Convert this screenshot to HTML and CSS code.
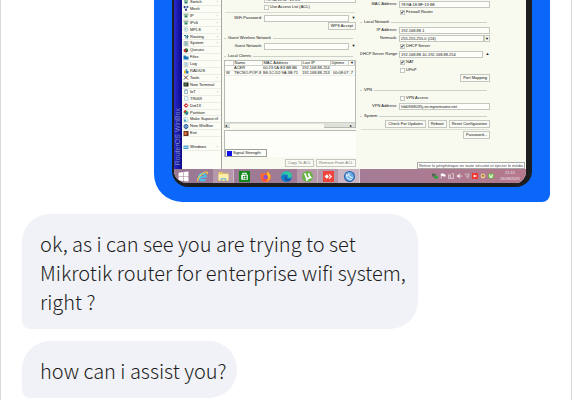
FILE: index.html
```html
<!DOCTYPE html>
<html lang="en">
<head>
<meta charset="utf-8">
<title>Conversation</title>
<link rel="stylesheet" href="styles.css">
</head>
<body>
<main class="chat">
  <article class="shared">
    <div class="screen">
      <div class="desktop">
        <div class="brand"><span>RouterOS WinBox</span></div>
        <nav class="menu">
          <button class="item more"><svg viewBox="0 0 10 10"><path fill="#8ba" d="M1 1h8v4H1z"/><path fill="#376" d="M2 5h6v4H2z"/></svg>Switch</button>
          <button class="item"><svg viewBox="0 0 10 10"><path stroke="#447" d="M2 2h6L4 8z" fill="none"/><circle cx="2" cy="2" r="2" fill="#239"/><circle cx="8" cy="2" r="2" fill="#36a"/><circle cx="5" cy="8" r="2" fill="#239"/></svg>Mesh</button>
          <button class="item more"><svg viewBox="0 0 10 10"><path fill="#9ba" d="M0 1h10v4H0z"/><path fill="#386" d="M2 5h6v4H2z"/></svg>IP</button>
          <button class="item more"><svg viewBox="0 0 10 10"><path fill="#9ba" d="M0 1h10v4H0z"/><path fill="#386" d="M2 5h6v4H2z"/></svg>IPv6</button>
          <button class="item more"><svg viewBox="0 0 10 10"><circle cx="5" cy="5" r="4" fill="#eff" stroke="#7aa"/><path d="M5 2v3H3" fill="none" stroke="#688"/></svg>MPLS</button>
          <button class="item more"><svg viewBox="0 0 10 10"><path d="M1 3h4v6M8 9V3L6 5M8 3l2 2" fill="none" stroke="#278" stroke-width="2"/></svg>Routing</button>
          <button class="item more"><svg viewBox="0 0 10 10"><path fill="#cdd" stroke="#799" d="M1 1h8v8H1z"/><path fill="#7aa" d="M3 3h4v4H3z"/></svg>System</button>
          <button class="item"><svg viewBox="0 0 10 10"><circle cx="5" cy="5" r="4" fill="#232"/><path fill="#c33" d="M0 3h5v5H1z"/><path fill="#384" d="M5 1h3v4H5z"/></svg>Queues</button>
          <button class="item"><svg viewBox="0 0 10 10"><path fill="#17b" d="M0 1h4l1 2h5v6H0z"/></svg>Files</button>
          <button class="item"><svg viewBox="0 0 10 10"><path fill="#dee" stroke="#abb" d="M1 1h8v8H1z"/><path stroke="#8ab" d="M3 3h4M3 5h4M3 7h4"/></svg>Log</button>
          <button class="item"><svg viewBox="0 0 10 10"><path fill="#e7b52b" d="M1 3h4v6H1z"/><path fill="#27b" d="M5 4h5v5H5z"/><circle cx="6" cy="2" r="2" fill="#49c"/></svg>RADIUS</button>
          <button class="item more"><svg viewBox="0 0 10 10"><path stroke="#b33" stroke-width="2" d="M1 1l8 8"/><path stroke="#355" stroke-width="2" d="M9 1L1 9"/></svg>Tools</button>
          <button class="item"><svg viewBox="0 0 10 10"><path fill="#232" d="M0 1h10v8H0z"/><path stroke="#cdc" d="M2 4h5M2 6h3"/></svg>New Terminal</button>
          <button class="item more"><svg viewBox="0 0 10 10"><path fill="#eff" stroke="#478" d="M2 3h6v6H2z"/><path d="M2 2q3-3 6 0" fill="none" stroke="#47b"/></svg>IoT</button>
          <button class="item"><svg viewBox="0 0 10 10"><path fill="#eff" stroke="#8ab" d="M2 1h7v8H2z"/></svg>TR069</button>
          <button class="item"><svg viewBox="0 0 10 10"><path fill="#c33" d="M5 0l5 5-5 5-5-5z"/><path fill="#fff" d="M4 4h3v2H4z"/></svg>Dot1X</button>
          <button class="item"><svg viewBox="0 0 10 10"><circle cx="5" cy="5" r="4" fill="#3a5"/><path fill="#c33" d="M5 5V0a5 5 0 0 0-5 5z"/><path fill="#37b" d="M5 5h5a5 5 0 0 1-5 5z"/></svg>Partition</button>
          <button class="item"><svg viewBox="0 0 10 10"><path fill="#eff" stroke="#8ab" d="M1 1h6l2 3v5H1z"/><path fill="#49b" d="M1 5h4v4H1z"/></svg>Make Supout.rif</button>
          <button class="item"><svg viewBox="0 0 10 10"><circle cx="5" cy="5" r="4" fill="#bdf" stroke="#259" stroke-width="2"/><path fill="#259" d="M4 2h2v6H4z"/></svg>New WinBox</button>
          <button class="item"><svg viewBox="0 0 10 10"><path fill="#632" d="M0 0h10v10H0z"/><path fill="#e73" d="M2 2h4v6H2z"/></svg>Exit</button>
          <span></span>
          <button class="item more"><svg viewBox="0 0 10 10"><path fill="#49c" d="M0 1h10v7H0z"/><path fill="#9ce" d="M1 3h8v3H1z"/></svg>Windows</button>
        </nav>

        <section class="wireless">
          <div class="row cut"><label for="wmac">MAC Address:</label><input class="field" id="wmac" value="78:9A:18:BF:13:8C"></div>
          <div class="row"><span class="tick"><input type="checkbox" id="acl"><label for="acl">Use Access List (ACL)</label></span></div>
          <hr>
          <div class="row drop"><label for="pass">WiFi Password:</label><input class="field" id="pass"><button class="arrow" aria-label="Show password">▼</button></div>
          <div class="actions"><button class="btn">WPS Accept</button></div>
          <h2 class="spaced">Guest Wireless Network</h2>
          <div class="row drop"><label for="guest">Guest Network:</label><input class="field" id="guest"><button class="arrow" aria-label="Choose network">▼</button></div>
          <h2 class="clients">Local Clients</h2>
          <div class="list">
            <table>
              <thead><tr><th class="flag"></th><th class="name">Name</th><th class="mac">MAC Address</th><th class="ip">Last IP</th><th>Uptime</th><th class="pick">▼</th></tr></thead>
              <tbody>
                <tr><td></td><td>ACER</td><td>00:23:5A:E3:B8:B6</td><td>192.168.88.254</td><td></td><td></td></tr>
                <tr><td>W</td><td>TECNO-POP-8</td><td>B6:1C:D2:9A:3B:71</td><td>192.168.88.253</td><td class="num">00:08:07</td><td>-7</td></tr>
              </tbody>
            </table>
            <div class="scroll"><span>◂</span><i></i><span>▸</span></div>
          </div>
          <div class="graph"><span class="legend"><i></i>Signal Strength:</span></div>
          <div class="actions acl"><button class="btn" disabled>Copy To ACL</button><button class="btn" disabled>Remove From ACL</button></div>
        </section>

        <section class="network">
          <div class="row"><label for="mac">MAC Address:</label><input class="field" id="mac" value="78:9A:18:BF:13:8E"></div>
          <div class="row"><span class="tick"><input type="checkbox" id="fw" checked><label for="fw">Firewall Router</label></span></div>
          <h2 class="local">Local Network</h2>
          <div class="row"><label for="ip">IP Address:</label><input class="field" id="ip" value="192.168.88.1"></div>
          <div class="row drop boxed"><label for="mask">Netmask:</label><input class="field" id="mask" value="255.255.255.0 (/24)"><button class="arrow" aria-label="Choose netmask">▼</button></div>
          <div class="row"><span class="tick"><input type="checkbox" id="dhcp" checked><label for="dhcp">DHCP Server</label></span></div>
          <div class="row drop"><label for="range">DHCP Server Range:</label><input class="field" id="range" value="192.168.88.10-192.168.88.254"><button class="arrow" aria-label="Collapse range">▲</button></div>
          <div class="row"><span class="tick"><input type="checkbox" id="nat" checked><label for="nat">NAT</label></span></div>
          <div class="row"><span class="tick"><input type="checkbox" id="upnp"><label for="upnp">UPnP</label></span></div>
          <div class="actions"><button class="btn">Port Mapping</button></div>
          <h2 class="vpn">VPN</h2>
          <div class="row"><span class="tick"><input type="checkbox" id="vpn"><label for="vpn">VPN Access</label></span></div>
          <div class="row"><label for="vaddr">VPN Address:</label><input class="field" id="vaddr" value="hfd0968035j.sn.mynetname.net"></div>
          <h2 class="system">System</h2>
          <div class="actions"><button class="btn">Check For Updates</button><button class="btn">Reboot</button><button class="btn">Reset Configuration</button></div>
          <hr>
          <div class="actions"><button class="btn">Password...</button></div>
        </section>
        <div class="tip" role="tooltip">Retirer le périphérique en toute sécurité et éjecter le média</div>
      </div>

      <footer class="taskbar">
        <button class="app" aria-label="Start"><svg viewBox="0 0 20 20"><path fill="#fff" d="M1 3l8-1v7H1zM10 2l9-1v8h-9zM1 10h8v8l-8-1zM10 10h9v9l-9-1z"/></svg></button>
        <button class="app" aria-label="Internet Explorer"><svg viewBox="0 0 20 20"><circle cx="10" cy="11" r="6" fill="none" stroke="#4bc3f0" stroke-width="4"/><path d="M6 11h12" stroke="#4bc3f0" stroke-width="3"/><path fill="#a07a96" d="M13 12h7v3h-7z"/><path d="M2 19C-2 15 11 1 18 2q2 1 0 4" fill="none" stroke="#f5cc45" stroke-width="2"/></svg></button>
        <button class="app open" aria-label="File Explorer"><svg viewBox="0 0 20 20"><path fill="#e9c965" d="M1 2h7l1 2h10v14H1z"/><path fill="#fff0ae" d="M1 6h18v11H1z"/><path fill="#62b3d2" d="M5 13h10v5h-2v-3H7v3H5z"/></svg></button>
        <button class="app" aria-label="Store"><svg viewBox="0 0 20 20"><path fill="#12861c" d="M0 0h20v20H0z"/><path fill="#fff" d="M4 7h12v9H4z"/><path d="M7 7V4h6v3" fill="none" stroke="#fff" stroke-width="2"/><path fill="#12861c" d="M7 9h3v2H7zM11 8h3v3h-3zM7 12h3v2H7zM11 12h3v3h-3z"/></svg></button>
        <button class="app" aria-label="Firefox"><svg viewBox="0 0 20 20"><path fill="#ff6b2b" d="M3 3l3 2q3-1 5 0l2-5q7 5 7 11a9 9 0 0 1-19 0Q0 6 3 3z"/><path fill="#ffc52f" d="M13 1q6 4 6 10-1 6-7 8 6-5 1-12z"/><circle cx="10" cy="11" r="4" fill="#8951cb"/><path fill="#ff3957" d="M2 12q4 5 10 4l-3 3q-5-1-7-7z"/></svg></button>
        <button class="app" aria-label="Edge"><svg viewBox="0 0 20 20"><circle cx="10" cy="10" r="10" fill="#1379c9"/><path fill="#36c6a0" d="M0 10C1-3 20-2 20 9q-1 5-8 3 3-6-4-6-6 0-8 4z"/><path fill="#164f9c" d="M8 9q-4 7 5 9 4 0 5-3-8 2-10-6z"/></svg></button>
        <button class="app open" aria-label="uTorrent"><svg viewBox="0 0 20 20"><circle cx="10" cy="10" r="10" fill="#69b246"/><path d="M5 4l3 8q4 4 6-1l-2-7M14 10l3 3M8 11l1 7" fill="none" stroke="#fff" stroke-width="3"/></svg></button>
        <button class="app open" aria-label="AnyDesk"><svg viewBox="0 0 20 20"><path fill="#ef443b" d="M0 0h20v20H0z"/><path fill="#fff" d="M7 6l4 4-4 4-4-4z"/><path d="M11 6l4 4-4 4" fill="none" stroke="#fff" stroke-width="2"/></svg></button>
        <button class="app active" aria-label="WinBox"><svg viewBox="0 0 20 20"><circle cx="10" cy="10" r="9" fill="#6aaae3" stroke="#2464af" stroke-width="2"/><path d="M4 5q0 10 11 11M8 4q0 7 8 8M6 9l4-4" fill="none" stroke="#d7edff" stroke-width="2"/></svg></button>
        <div class="tray">
          <svg viewBox="0 0 10 10"><path fill="#565" d="M0 1h6v5H0z"/><circle cx="7" cy="7" r="3" fill="#28a834"/></svg>
          <svg viewBox="0 0 10 10"><path d="M2 1v8" stroke="#fff"/><path fill="#fff" d="M2 1h4v1h3v4H5V5H2z"/></svg>
          <svg viewBox="0 0 10 10"><path d="M1 3h3v6H1zM6 1h3v8H5" fill="none" stroke="#fff"/></svg>
          <svg viewBox="0 0 10 10"><path fill="#fff" d="M1 4h2l3-3v8L3 6H1z"/><path d="M8 3q2 2 0 4" fill="none" stroke="#fff"/></svg>
          <svg viewBox="0 0 10 10"><path d="M1 2h6v3l-2 3M3 4l5 5M8 1v5" fill="none" stroke="#ddd"/></svg>
          <svg viewBox="0 0 10 10"><path fill="#ef3831" d="M0 0h10v10H0z"/><path fill="#fff" d="M2 5l2-2 2 2-2 2zM6 3l2 2-2 2z"/></svg>
          <svg viewBox="0 0 10 10"><circle cx="5" cy="5" r="4" fill="#e8d29b"/><path fill="#a87539" d="M3 3h4v3H3z"/></svg>
          <svg viewBox="0 0 10 10"><circle cx="5" cy="5" r="5" fill="#65b33c"/><path d="M3 2v4q3 3 4-1V2" fill="none" stroke="#fff" stroke-width="2"/></svg>
        </div>
        <time class="clock">21:15<br>26/08/2025</time>
      </footer>
    </div>
  </article>

  <p class="bubble">ok, as i can see you are trying to set Mikrotik router for enterprise wifi system, right ?</p>
  <p class="bubble">how can i assist you?</p>
</main>
</body>
</html>
```
FILE: styles.css
```css
* { box-sizing: border-box; }

body {
  margin: 0;
  background: #fff;
  overflow: hidden;
}

.chat {
  display: flex;
  flex-direction: column;
  align-items: flex-start;
  gap: 12px;
  min-height: 100vh;
  padding: 0 21px;
  border: solid #d9d9dc;
  border-width: 0 1px;
}

.bubble {
  margin: 0;
  max-width: 75%;
  padding: 15px 10px 13px 18px;
  border-radius: 28px 28px 28px 8px;
  background: #f1f2f7;
  color: #1c1c20;
  font: 300 20px/29px "Noto Sans CJK SC", "Open Sans", sans-serif;
}

.shared {
  align-self: flex-end;
  width: 75%;
  padding: 0 18px 15px;
  border-radius: 0 0 8px 28px;
  background: #0b66fa;
}

.screen {
  overflow: hidden;
  border: solid #1d1e20;
  border-width: 0 6px 4px 2px;
  border-radius: 0 0 16px 16px;
  background: #f8faf0;
  color: #111;
  font: 4px/8px "Liberation Sans", sans-serif;
}

.desktop {
  position: relative;
  display: flex;
  height: 169px;
}

button, input {
  margin: 0;
  padding: 0;
  border: 0;
  background: none;
  color: inherit;
  font: inherit;
}

.brand {
  width: 8px;
  display: flex;
  align-items: flex-end;
  padding-bottom: 4px;
  background: linear-gradient(90deg, #2a2ad0, #090b83);
  color: #7a86c4;
  font: 7px/8px "Liberation Sans", sans-serif;
}

.brand span {
  writing-mode: vertical-rl;
  transform: rotate(180deg);
  white-space: nowrap;
}

.menu {
  width: 40px;
  display: grid;
  grid-template-rows: repeat(22, 1fr);
  margin-top: -1px;
  padding-bottom: 18px;
  border-right: 1px solid #a3a8a4;
  background: #fcfdf6;
}

.item {
  display: flex;
  align-items: center;
  gap: 1px;
  min-height: 0;
  padding-left: 1px;
  border-bottom: 1px solid #eceee6;
  white-space: nowrap;
  line-height: 6px;
}

.item svg { width: 6px; height: 5px; flex: none; }

.more::after {
  content: "›";
  margin-left: auto;
  padding-right: 3px;
  color: #999;
}

.wireless { width: 134px; padding-left: 2px; overflow: hidden; }
.network { flex: 1; padding: 0 36px 0 4px; }

.row {
  display: grid;
  grid-template-columns: 37px minmax(0, 1fr);
  align-items: center;
  column-gap: 2px;
  height: 8px;
}

.row > label { text-align: right; white-space: nowrap; }
.row.drop { grid-template-columns: 37px minmax(0, 1fr) 5px; }
.row.boxed { column-gap: 0; grid-template-columns: 39px minmax(0, 1fr) 6px; }
.row.boxed > label { padding-right: 2px; }
.row.cut { margin-top: -5px; }

.field {
  width: 100%;
  height: 7px;
  padding: 0 1px;
  border: 1px solid #c3c7c0;
  background: #fdfef9;
  line-height: 5px;
}

.arrow { line-height: 6px; color: #111; }
.boxed .arrow { border: 1px solid #c3c7c0; line-height: 5px; }

.tick {
  grid-column: 2;
  display: flex;
  align-items: center;
  gap: 1px;
  padding-left: 1px;
}

.tick input {
  appearance: none;
  display: grid;
  place-items: center;
  width: 5px;
  height: 5px;
  outline: 1px solid #c3c7c0;
  outline-offset: -1px;
  background: #fff;
  font: 5px/5px "DejaVu Sans", sans-serif;
}

.tick input:checked::before { content: "✔"; }

hr {
  height: 1px;
  margin: 1px;
  border: 0;
  background: #d9dcd3;
}

h2 {
  display: flex;
  align-items: center;
  gap: 2px;
  margin: 0 3px 0 0;
  font: inherit;
}

h2::before, h2::after {
  content: "";
  width: 2px;
  height: 1px;
  background: #cdd0c8;
}

h2::after { flex: 1; }

.spaced { margin-top: 4px; }
.clients { margin-top: 2px; }
.local { margin-top: 2px; }
.vpn { margin-top: 4px; }
.system { margin-top: 2px; }

.actions { display: flex; justify-content: flex-end; gap: 2px; }

.btn {
  height: 8px;
  padding: 0 2px;
  border: 1px solid #c3c7c0;
  background: #f9fbf4;
  line-height: 6px;
  white-space: nowrap;
}

.btn:disabled { color: #7c7f79; }
.acl { margin-top: 2px; }

.wireless .drop, .wireless .cut { padding-left: 1px; }

.list {
  display: flex;
  flex-direction: column;
  height: 68px;
  border: 1px solid #b6bab4;
  background: #fdfef9;
}

table { width: 100%; border-collapse: collapse; table-layout: fixed; }
th, td { padding: 0 0 0 1px; line-height: 4px; text-align: left; font-weight: normal; white-space: nowrap; }
th { border: solid #cdd0c8; border-width: 0 1px 1px 0; }
tbody tr { border-bottom: 1px solid #eceee6; }
.flag { width: 8px; }
.name { width: 29px; }
.mac { width: 39px; }
.ip { width: 29px; }
.pick { width: 6px; }
.num { text-align: right; }

.scroll {
  display: grid;
  grid-template-columns: 5px 1fr 5px;
  align-items: center;
  height: 5px;
  margin-top: auto;
  line-height: 5px;
  border-top: 1px solid #cdd0c8;
  background: #dfe2d9;
}

.scroll i { height: 4px; margin-right: 26px; background: #fafcf4; }

.graph {
  display: flex;
  align-items: flex-end;
  height: 27px;
  margin-top: 2px;
  border: solid #b6bab4;
  border-width: 1px 0 0 1px;
  background: #fdfef9;
}

.legend {
  display: flex;
  align-items: center;
  gap: 1px;
  width: 42px;
  height: 8px;
  padding-left: 1px;
  border: 1px solid #9da19c;
  white-space: nowrap;
}

.legend i { width: 5px; height: 5px; background: #1010e8; }

.tip {
  position: absolute;
  right: 1px;
  bottom: 0;
  padding: 0 1px;
  border: 1px solid #a9aaa6;
  background: #fff;
  color: #444;
  line-height: 5px;
  white-space: nowrap;
}

.taskbar {
  display: flex;
  height: 14px;
  background: linear-gradient(90deg, #9a7894, #a37c96 50%, #b5798d);
}

.app { display: grid; place-items: center; width: 21px; flex: none; }
.app:first-child { width: 18px; }
.app svg { width: 11px; height: 11px; }
.open { background: #b598aa; border-right: 1px solid #cbb4c3; }
.active { background: #cab5c5; border-right: 1px solid #ddd0d9; }

.tray { display: flex; align-items: center; gap: 2px; margin-left: auto; }
.tray svg { width: 6px; height: 6px; }

.clock {
  width: 32px;
  padding-top: 1px;
  text-align: center;
  color: #f1e4ec;
  line-height: 6px;
}
```
